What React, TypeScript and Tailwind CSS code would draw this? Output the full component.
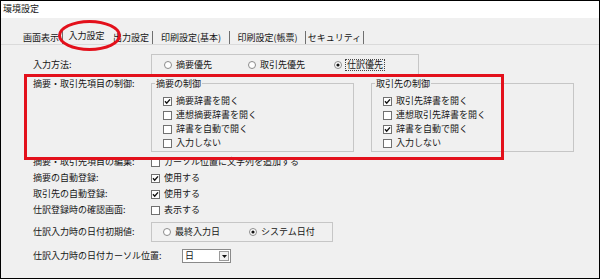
import React from "react";

function Check({ checked = false }: { checked?: boolean }) {
  return (
    <svg width="9" height="9" viewBox="0 0 9 9" className="shrink-0">
      <rect x="0.5" y="0.5" width="8" height="8" fill="#fff" stroke="#707070" />
      {checked && <path d="M2 4.3 L3.7 6.2 L7 2.4" fill="none" stroke="#111" strokeWidth="1.4" />}
    </svg>
  );
}

function Radio({ checked = false }: { checked?: boolean }) {
  return (
    <svg width="8" height="8" viewBox="0 0 8 8" className="shrink-0">
      <circle cx="4" cy="4" r="3.5" fill="#fff" stroke="#8a8a8a" />
      {checked && <circle cx="4" cy="4" r="1.6" fill="#111" />}
    </svg>
  );
}

function CheckRow({ label, checked }: { label: string; checked?: boolean }) {
  return (
    <div className="flex h-[14px] items-center gap-[4px]">
      <Check checked={checked} />
      <span>{label}</span>
    </div>
  );
}

function Group({ title, items }: { title: string; items: [string, boolean][] }) {
  return (
    <div className="mt-[7px] h-[69px] w-[203px] border border-[#c6c6c6] pl-[11px]">
      <div className="-ml-[8px] -mt-[7px] h-[14px] w-fit bg-[#f0f0f0] px-[1px] leading-[14px]">{title}</div>
      <div className="mt-[3px] flex flex-col">
        {items.map(([l, c]) => (
          <CheckRow key={l} label={l} checked={c} />
        ))}
      </div>
    </div>
  );
}

function Row({ label, children }: { label: string; children: React.ReactNode }) {
  return (
    <div className="flex h-[16px] items-center">
      <span className="w-[118px] shrink-0">{label}</span>
      {children}
    </div>
  );
}

const tabs = [
  { name: "画面表示", w: "w-[43px]" },
  { name: "入力設定", w: "w-[47px]", active: true },
  { name: "出力設定", w: "w-[43px]" },
  { name: "印刷設定(基本)", w: "w-[77px]" },
  { name: "印刷設定(帳票)", w: "w-[76px]" },
  { name: "セキュリティ", w: "w-[58px]" },
];

export default function App() {
  return (
    <div
      className="relative h-[279px] w-[600px] overflow-hidden border border-black bg-[#f0f0f0] text-[9px] text-[#151515]"
      style={{ fontFamily: '"Noto Sans CJK JP", "Noto Sans", sans-serif' }}
    >
      <div className="h-[17px] bg-white pl-[2px] leading-[16px]">環境設定</div>

      <div className="flex h-[26px] items-end pl-[19px]">
        {tabs.map((t) => (
          <div
            key={t.name}
            className={`${t.w} h-[13px] shrink-0 border-r border-[#6f6f6f] text-center leading-[13px] ${t.active ? "-translate-y-[2px] border-r-0" : ""}`}
          >
            {t.name}
          </div>
        ))}
      </div>

      <div className="border-t border-[#dadada] pl-[32px] pt-[9px]">
        <div className="flex h-[22px] items-center">
          <span className="w-[118px] shrink-0">入力方法:</span>
          <div className="flex h-[22px] w-[268px] items-center border border-[#c6c6c6] pl-[12px]">
            <div className="flex w-[84px] items-center gap-[4px]">
              <Radio />
              <span>摘要優先</span>
            </div>
            <div className="flex w-[86px] items-center gap-[4px]">
              <Radio />
              <span>取引先優先</span>
            </div>
            <div className="flex items-center gap-[3px]">
              <Radio checked />
              <span className="border border-dotted border-[#444] px-[1px] leading-[10px]">仕訳優先</span>
            </div>
          </div>
        </div>

        <div className="flex">
          <span className="mt-[1px] w-[118px] shrink-0 leading-[14px]">摘要・取引先項目の制御:</span>
          <div className="flex gap-[17px]">
            <Group
              title="摘要の制御"
              items={[
                ["摘要辞書を開く", true],
                ["連想摘要辞書を開く", false],
                ["辞書を自動で開く", false],
                ["入力しない", false],
              ]}
            />
            <Group
              title="取引先の制御"
              items={[
                ["取引先辞書を開く", true],
                ["連想取引先辞書を開く", false],
                ["辞書を自動で開く", true],
                ["入力しない", false],
              ]}
            />
          </div>
        </div>

        <div className="mt-[2px] flex flex-col">
          <Row label="摘要・取引先項目の編集:">
            <CheckRow label="カーソル位置に文字列を追加する" />
          </Row>
          <Row label="摘要の自動登録:">
            <CheckRow label="使用する" checked />
          </Row>
          <Row label="取引先の自動登録:">
            <CheckRow label="使用する" checked />
          </Row>
          <Row label="仕訳登録時の確認画面:">
            <CheckRow label="表示する" />
          </Row>
        </div>

        <div className="mt-[4px] flex h-[20px] items-center">
          <span className="w-[118px] shrink-0">仕訳入力時の日付初期値:</span>
          <div className="flex h-[20px] w-[182px] items-center border border-[#c6c6c6] pl-[11px]">
            <div className="flex w-[86px] items-center gap-[4px]">
              <Radio />
              <span>最終入力日</span>
            </div>
            <div className="flex items-center gap-[4px]">
              <Radio checked />
              <span>システム日付</span>
            </div>
          </div>
        </div>

        <div className="mt-[7px] flex h-[14px] items-center">
          <span className="w-[149px] shrink-0">仕訳入力時の日付カーソル位置:</span>
          <div className="flex h-[14px] w-[49px] items-center justify-between border border-[#8a8a8a] bg-white pl-[2px]">
            <span className="leading-[12px]">日</span>
            <div className="mr-[1px] flex h-[10px] w-[10px] items-center justify-center border border-[#9a9a9a] bg-[#f0f0f0]">
              <svg width="5" height="3" viewBox="0 0 5 3">
                <path d="M0 0 H5 L2.5 3 Z" fill="#111" />
              </svg>
            </div>
          </div>
        </div>
      </div>

      <div className="pointer-events-none absolute left-[57px] top-[19px] h-[31px] w-[63px] rounded-[50%] border-[3px] border-[#e3101b]" />
      <div className="pointer-events-none absolute left-[23px] top-[73px] h-[86px] w-[480px] border-[3px] border-[#e3101b]" />
    </div>
  );
}
